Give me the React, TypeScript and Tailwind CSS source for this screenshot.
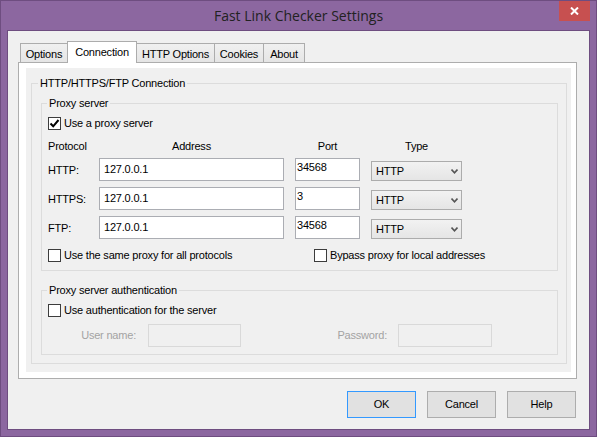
import React from "react";

const tabs = [
  { label: "Options", w: "w-[48px]" },
  { label: "Connection", w: "w-[70px]", active: true },
  { label: "HTTP Options", w: "w-[79px]" },
  { label: "Cookies", w: "w-[50px]" },
  { label: "About", w: "w-[42px]" },
];

const proxies = [
  { proto: "HTTP:", addr: "127.0.0.1", port: "34568" },
  { proto: "HTTPS:", addr: "127.0.0.1", port: "3" },
  { proto: "FTP:", addr: "127.0.0.1", port: "34568" },
];

function CheckBox({ checked, label }: { checked?: boolean; label: string }) {
  return (
    <div className="flex items-center gap-[3px] h-[13px]">
      <div className="w-[13px] h-[13px] border border-[#3c3c3c] bg-white flex items-center justify-center">
        {checked && (
          <svg width="11" height="11" viewBox="0 0 11 11">
            <path d="M1.5 5.5 L4.2 8.3 L9.5 2" fill="none" stroke="#000" strokeWidth="2" />
          </svg>
        )}
      </div>
      <span className="leading-[13px]">{label}</span>
    </div>
  );
}

function Select({ value }: { value: string }) {
  return (
    <div className="mt-[3px] w-[91px] h-[20px] border border-[#acacac] bg-gradient-to-b from-[#f2f2f2] to-[#e5e5e5] flex items-center justify-between pl-[4px] pr-[3px]">
      <span className="pt-[1px]">{value}</span>
      <svg width="7" height="5" viewBox="0 0 7 5" className="mt-[1px]">
        <path d="M0.5 0.5 L3.5 3.8 L6.5 0.5" fill="none" stroke="#555" strokeWidth="1.6" />
      </svg>
    </div>
  );
}

export default function App() {
  return (
    <div className="w-[597px] h-[437px] bg-[#8c67a0] border border-[#6e4d80] flex flex-col font-['Liberation_Sans',Arial,sans-serif] text-[11px] text-black">
      {/* Title bar */}
      <div className="h-[29px] grid grid-cols-[1fr_auto_1fr]">
        <div />
        <div className="self-center font-['Open_Sans',sans-serif] text-[14px] text-[#222] leading-[20px] pt-[1px]">
          Fast Link Checker Settings
        </div>
        <div className="flex justify-end items-start mr-[6px]">
          <div className="w-[31px] h-[20px] bg-[#c75050] flex items-center justify-center">
            <svg width="9" height="8" viewBox="0 0 9 8">
              <path d="M1 0.5 L8 7.5 M8 0.5 L1 7.5" stroke="#fff" strokeWidth="2" />
            </svg>
          </div>
        </div>
      </div>

      {/* Client */}
      <div className="mx-[6px] h-[400px] border border-[#6e4d80] bg-[#f0f0f0] pt-[10px] pl-[10px] tracking-[-0.2px]">
        {/* Tabs */}
        <div className="flex items-start ml-[2px] -mb-px">
          {tabs.map((t, i) =>
            t.active ? (
              <div
                key={t.label}
                className={`${t.w} ${i > 0 ? "-ml-px" : ""} h-[22px] relative z-10 bg-white border border-b-0 border-[#acacac] flex items-center justify-center leading-[13px]`}
              >
                {t.label}
              </div>
            ) : (
              <div
                key={t.label}
                className={`${t.w} ${i > 0 ? "-ml-px" : ""} mt-[2px] h-[19px] bg-gradient-to-b from-[#f0f0f0] to-[#e5e5e5] border border-b-0 border-[#acacac] flex items-center justify-center pt-[3px] leading-[13px]`}
              >
                {t.label}
              </div>
            )
          )}
        </div>

        {/* Tab page */}
        <div className="w-[559px] h-[317px] border border-[#adadad] bg-white pt-[5px] pl-[7px] pr-[5px] pb-[6px]">
          <div className="h-[304px] w-[545px] bg-[#f0f0f0] pt-[9px]">
            <fieldset className="ml-[5px] w-[536px] border border-[#dcdcdc] pl-[9px] pr-[8px] pb-[8px]">
              <legend className="-ml-[3px] px-[2px] leading-[13px]">HTTP/HTTPS/FTP Connection</legend>

              {/* Proxy server */}
              <fieldset className="mt-[7px] w-[517px] border border-[#dcdcdc] pl-[6px] pb-[8px]">
                <legend className="-ml-px px-[2px] leading-[13px]">Proxy server</legend>
                <div className="mt-[7px]">
                  <CheckBox checked label="Use a proxy server" />
                </div>
                <div className="mt-[10px] h-[13px] flex items-center leading-[13px]">
                  <div className="w-[51px]">Protocol</div>
                  <div className="w-[185px] text-center">Address</div>
                  <div className="ml-[11px] w-[65px] text-center">Port</div>
                  <div className="ml-[11px] w-[91px] text-center">Type</div>
                </div>
                {proxies.map((p, i) => (
                  <div key={p.proto} className={`${i === 0 ? "mt-[5px]" : "mt-[6px]"} h-[23px] flex items-start`}>
                    <div className="w-[51px] h-[23px] flex items-center pt-[1px]">{p.proto}</div>
                    <div className="w-[185px] h-[23px] border border-[#abadb3] bg-white pl-[4px] flex items-center">
                      {p.addr}
                    </div>
                    <div className="ml-[11px] w-[65px] h-[23px] border border-[#abadb3] bg-white pl-[1px] pt-[2px] leading-[13px]">
                      {p.port}
                    </div>
                    <div className="ml-[11px]">
                      <Select value="HTTP" />
                    </div>
                  </div>
                ))}
                <div className="mt-[10px] flex">
                  <div className="w-[266px]">
                    <CheckBox label="Use the same proxy for all protocols" />
                  </div>
                  <CheckBox label="Bypass proxy for local addresses" />
                </div>
              </fieldset>

              {/* Authentication */}
              <fieldset className="mt-[13px] w-[517px] border border-[#dcdcdc] pl-[6px] pb-[7px]">
                <legend className="-ml-px px-[2px] leading-[13px]">Proxy server authentication</legend>
                <div className="mt-[7px]">
                  <CheckBox label="Use authentication for the server" />
                </div>
                <div className="mt-[7px] h-[23px] flex items-center text-[#a3a3a3]">
                  <div className="w-[88px] text-right">User name:</div>
                  <div className="ml-[12px] w-[93px] h-[23px] border border-[#d9d9d9] bg-[#f0f0f0]" />
                  <div className="w-[146px] text-right">Password:</div>
                  <div className="ml-[11px] w-[94px] h-[23px] border border-[#d9d9d9] bg-[#f0f0f0]" />
                </div>
              </fieldset>
            </fieldset>
          </div>
        </div>

        {/* Buttons */}
        <div className="mt-[12px] w-[559px] pr-[1px] flex justify-end gap-[11px]">
          <button className="w-[69px] h-[27px] border border-[#3399ff] bg-[#e1e1e1]">OK</button>
          <button className="w-[69px] h-[27px] border border-[#adadad] bg-[#e1e1e1]">Cancel</button>
          <button className="w-[69px] h-[27px] border border-[#adadad] bg-[#e1e1e1]">Help</button>
        </div>
      </div>
    </div>
  );
}
